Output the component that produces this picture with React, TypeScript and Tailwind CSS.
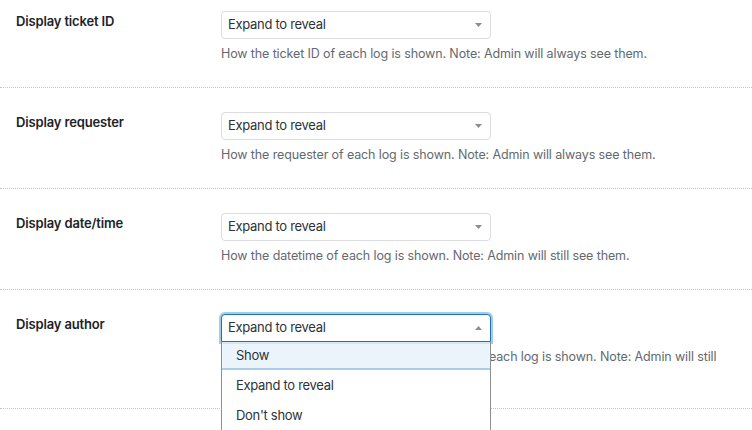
import React from "react";

function Arrow({ up = false }: { up?: boolean }) {
  return (
    <svg width="7" height="4" viewBox="0 0 7 4" className="shrink-0">
      {up ? <polygon points="0,4 7,4 3.5,0" fill="#8a8d91" /> : <polygon points="0,0 7,0 3.5,4" fill="#8a8d91" />}
    </svg>
  );
}

function Select({ focused = false }: { focused?: boolean }) {
  return (
    <div
      className={
        "relative flex h-[28px] w-[270px] items-center justify-between rounded-[4px] bg-white pl-[6px] pr-[8px] text-[13px] tracking-[-0.3px] text-[#2c3338] " +
        (focused
          ? "rounded-b-none border border-[#2271b1] shadow-[0_0_0_2px_#a3cbea]"
          : "border border-[#dcdcde]")
      }
    >
      <span>Expand to reveal</span>
      <Arrow up={focused} />
    </div>
  );
}

function Row({
  label,
  help,
  first = false,
  focused = false,
}: {
  label: string;
  help: React.ReactNode;
  first?: boolean;
  focused?: boolean;
}) {
  return (
    <div
      className={
        "flex border-b border-dotted border-[#c3c4c7] pb-[24px] " + (first ? "pt-[11px]" : "pt-[24px]")
      }
    >
      <div className="w-[221px] shrink-0 pl-[16px] pt-[1px] text-[13px] font-semibold leading-[18px] tracking-[-0.15px] text-[#1d2327]">
        {label}
      </div>
      <div className="relative min-w-0 flex-1">
        <Select focused={focused} />
        <div className="mt-[6px] whitespace-nowrap text-[12.5px] leading-[18px] tracking-[-0.12px] text-[#646970]">{help}</div>
        {focused && (
          <div className="absolute left-0 top-[28px] z-10 h-[130px] w-[270px] border-x border-[#8c8f94] bg-white text-[13px] tracking-[-0.3px] text-[#2c3338]">
            <div className="flex h-[28px] items-center border-b-2 border-[#a9cdea] bg-[#ebf4fb] pl-[14px] pt-[2px] shadow-[inset_0_2px_0_#d4e7f6]">
              Show
            </div>
            <div className="flex h-[30px] items-center pl-[14px] pt-[1px]">Expand to reveal</div>
            <div className="flex h-[30px] items-center pl-[14px] pt-[1px]">Don't show</div>
          </div>
        )}
      </div>
    </div>
  );
}

export default function App() {
  return (
    <div className="h-[430px] w-[752px] overflow-hidden bg-white font-['Inter',sans-serif] antialiased">
      <Row first label="Display ticket ID" help="How the ticket ID of each log is shown. Note: Admin will always see them." />
      <Row label="Display requester" help="How the requester of each log is shown. Note: Admin will always see them." />
      <Row label="Display date/time" help="How the datetime of each log is shown. Note: Admin will still see them." />
      <Row
        focused
        label="Display author"
        help={
          <>
            <span className="invisible">How the display name of the acting author for </span>
            each log is shown. Note: Admin will still
            <br />
            <span className="invisible">see them.</span>
          </>
        }
      />
    </div>
  );
}
